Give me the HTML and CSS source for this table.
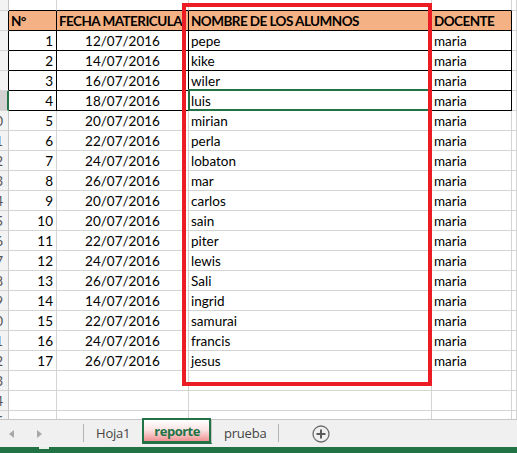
FILE: index.html
```html
<!DOCTYPE html>
<html lang="es">
<head>
<meta charset="utf-8">
<title>reporte</title>
<link rel="stylesheet" href="styles.css">
</head>
<body>
<div class="app">
  <div class="sheet">
    <div class="grid">
      <!-- row 4 (partial) -->
      <div class="rh"></div><div class="c tb"></div><div class="c tb"></div><div class="c tb"></div><div class="c tb"></div><div class="c"></div><div class="c"></div>
      <!-- header row 5 -->
      <div class="rh blk"></div><div class="c b hd">N°</div><div class="c b hd">FECHA MATERICULA</div><div class="c b hd">NOMBRE DE LOS ALUMNOS</div><div class="c b hd">DOCENTE</div><div class="c"></div><div class="c"></div>

      <div class="rh blk"></div><div class="c b num">1</div><div class="c b date">12/07/2016</div><div class="c b name">pepe</div><div class="c b doc">maria</div><div class="c"></div><div class="c"></div>
      <div class="rh blk"></div><div class="c b num">2</div><div class="c b date">14/07/2016</div><div class="c b name">kike</div><div class="c b doc">maria</div><div class="c"></div><div class="c"></div>
      <div class="rh blk"></div><div class="c b num">3</div><div class="c b date">16/07/2016</div><div class="c b name">wiler</div><div class="c b doc">maria</div><div class="c"></div><div class="c"></div>
      <div class="rh sel"></div><div class="c b num">4</div><div class="c b date">18/07/2016</div><div class="c b name active">luis</div><div class="c b doc">maria</div><div class="c"></div><div class="c"></div>

      <div class="rh"><span>10</span></div><div class="c num">5</div><div class="c date">20/07/2016</div><div class="c name">mirian</div><div class="c doc">maria</div><div class="c"></div><div class="c"></div>
      <div class="rh"><span>11</span></div><div class="c num">6</div><div class="c date">22/07/2016</div><div class="c name">perla</div><div class="c doc">maria</div><div class="c"></div><div class="c"></div>
      <div class="rh"><span>12</span></div><div class="c num">7</div><div class="c date">24/07/2016</div><div class="c name">lobaton</div><div class="c doc">maria</div><div class="c"></div><div class="c"></div>
      <div class="rh"><span>13</span></div><div class="c num">8</div><div class="c date">26/07/2016</div><div class="c name">mar</div><div class="c doc">maria</div><div class="c"></div><div class="c"></div>
      <div class="rh"><span>14</span></div><div class="c num">9</div><div class="c date">20/07/2016</div><div class="c name">carlos</div><div class="c doc">maria</div><div class="c"></div><div class="c"></div>
      <div class="rh"><span>15</span></div><div class="c num">10</div><div class="c date">20/07/2016</div><div class="c name">sain</div><div class="c doc">maria</div><div class="c"></div><div class="c"></div>
      <div class="rh"><span>16</span></div><div class="c num">11</div><div class="c date">22/07/2016</div><div class="c name">piter</div><div class="c doc">maria</div><div class="c"></div><div class="c"></div>
      <div class="rh"><span>17</span></div><div class="c num">12</div><div class="c date">24/07/2016</div><div class="c name">lewis</div><div class="c doc">maria</div><div class="c"></div><div class="c"></div>
      <div class="rh"><span>18</span></div><div class="c num">13</div><div class="c date">26/07/2016</div><div class="c name">Sali</div><div class="c doc">maria</div><div class="c"></div><div class="c"></div>
      <div class="rh"><span>19</span></div><div class="c num">14</div><div class="c date">14/07/2016</div><div class="c name">ingrid</div><div class="c doc">maria</div><div class="c"></div><div class="c"></div>
      <div class="rh"><span>20</span></div><div class="c num">15</div><div class="c date">22/07/2016</div><div class="c name">samurai</div><div class="c doc">maria</div><div class="c"></div><div class="c"></div>
      <div class="rh"><span>21</span></div><div class="c num">16</div><div class="c date">24/07/2016</div><div class="c name">francis</div><div class="c doc">maria</div><div class="c"></div><div class="c"></div>
      <div class="rh"><span>22</span></div><div class="c num">17</div><div class="c date">26/07/2016</div><div class="c name">jesus</div><div class="c doc">maria</div><div class="c"></div><div class="c"></div>

      <div class="rh"><span>23</span></div><div class="c"></div><div class="c"></div><div class="c"></div><div class="c"></div><div class="c"></div><div class="c"></div>
      <div class="rh"><span>24</span></div><div class="c"></div><div class="c"></div><div class="c"></div><div class="c"></div><div class="c"></div><div class="c"></div>
      <div class="rh"><span>25</span></div><div class="c"></div><div class="c"></div><div class="c"></div><div class="c"></div><div class="c"></div><div class="c"></div>
    </div>
    <div class="redbox"></div>
  </div>

  <div class="tabbar">
    <div class="nav">
      <span class="arrow left"></span>
      <span class="arrow right"></span>
    </div>
    <div class="sep"></div>
    <div class="tab">Hoja1</div>
    <div class="tab active">reporte</div>
    <div class="tab">prueba</div>
    <div class="sep"></div>
    <div class="addwrap">
      <svg class="add" width="18" height="18" viewBox="0 0 18 18">
        <circle cx="9" cy="9" r="8" fill="none" stroke="#6d6d6d" stroke-width="1.3"/>
        <path d="M9 4.5v9M4.5 9h9" stroke="#5a5a5a" stroke-width="2"/>
      </svg>
    </div>
  </div>
  <div class="status"><span class="ready"></span></div>
</div>
</body>
</html>
```

FILE: styles.css
```css
html, body {
  margin: 0;
  padding: 0;
  background: #ffffff;
}

.app {
  width: 517px;
  height: 453px;
  overflow: hidden;
  display: flex;
  flex-direction: column;
}

.sheet {
  position: relative;
  height: 419px;
  overflow: hidden;
  flex: none;
}

.grid {
  display: grid;
  grid-template-columns: 9px 48px 132px 243px 80px 5px 60px;
  grid-template-rows: 11px;
  grid-auto-rows: 20px;
  font-family: "Lato", "Liberation Sans", sans-serif;
  font-size: 13.5px;
  color: #000;
}

.c {
  box-sizing: border-box;
  border-right: 1px solid #d4d4d4;
  border-bottom: 1px solid #d4d4d4;
  line-height: 19px;
  padding-top: 1px;
  white-space: nowrap;
  overflow: hidden;
}

.c.tb {
  border-bottom-color: #000;
}

.c.b {
  border-right-color: #000;
  border-bottom-color: #000;
}

.rh {
  box-sizing: border-box;
  background: #f3f3f3;
  border-right: 1px solid #c6c6c6;
  border-bottom: 1px solid #d4d4d4;
  display: flex;
  justify-content: flex-end;
  overflow: hidden;
  font-family: "Lato", sans-serif;
  font-size: 13.5px;
  line-height: 19px;
  padding-top: 1px;
  color: #555;
}

.rh span {
  margin-right: 5px;
  flex: none;
}

.rh.blk {
  border-right-color: #000;
}

.rh.sel {
  background: #d2d2d2;
  border-right: 2px solid #217346;
}

.hd {
  background: #f4b183;
  font-weight: 700;
  font-size: 13.5px;
  letter-spacing: -0.55px;
  padding-left: 2px;
}

.num {
  text-align: right;
  padding-right: 3px;
}

.date {
  text-align: center;
}

.name {
  padding-left: 2px;
}

.doc {
  padding-left: 2px;
}

.active {
  position: relative;
  overflow: visible;
}

.active::after {
  content: "";
  position: absolute;
  top: -2px;
  left: -1px;
  right: 0;
  bottom: -1px;
  border: 2px solid #217346;
}

.redbox {
  position: absolute;
  left: 182px;
  top: 3px;
  width: 250px;
  height: 383px;
  box-sizing: border-box;
  border: 4px solid #ec1c24;
}

.tabbar {
  flex: none;
  height: 28px;
  box-sizing: border-box;
  background: #f0f0f0;
  border-top: 1px solid #c6c6c6;
  display: flex;
  align-items: stretch;
  font-family: "Open Sans", "Noto Sans", sans-serif;
  font-size: 13px;
  letter-spacing: -0.2px;
  color: #444;
}

.nav {
  width: 83px;
  display: flex;
  align-items: center;
  padding-left: 9px;
  gap: 23px;
  box-sizing: border-box;
}

.arrow {
  width: 0;
  height: 0;
  border-top: 4px solid transparent;
  border-bottom: 4px solid transparent;
}

.arrow.left {
  border-right: 5px solid #a8a8a8;
}

.arrow.right {
  border-left: 5px solid #a8a8a8;
}

.sep {
  width: 1px;
  background: #b4b4b4;
  margin: 4px 0 5px;
}

.tab {
  padding: 0 12px;
  display: flex;
  align-items: center;
  padding-bottom: 2px;
}

.tab.active {
  background: linear-gradient(#ffffff 0%, #fbe3e3 45%, #f08a8a 100%);
  color: #217346;
  font-weight: 700;
  letter-spacing: -0.5px;
  border-bottom: 2px solid #217346;
  border-left: 1px solid #c6c6c6;
  border-right: 1px solid #c6c6c6;
  padding: 0 11px;
  margin-bottom: 3px;
}

.addwrap {
  display: flex;
  align-items: center;
  padding-left: 33px;
}

.status {
  flex: none;
  height: 6px;
  background: #217346;
  position: relative;
}

.ready {
  position: absolute;
  left: 39px;
  top: 0;
  width: 10px;
  height: 2px;
  background: #e8efe9;
}
```
